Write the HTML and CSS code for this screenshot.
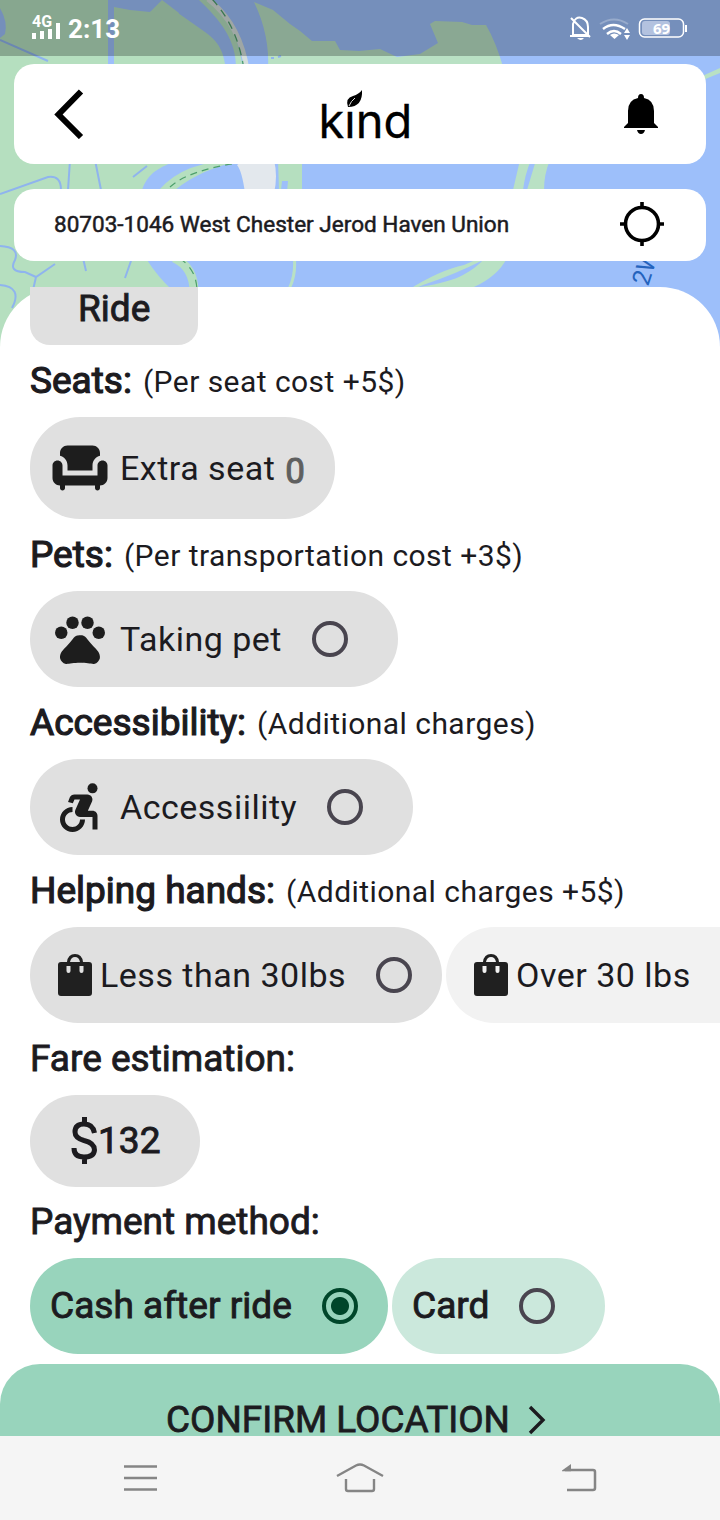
FILE: index.html
```
<!DOCTYPE html>
<html lang="en">
<head>
<meta charset="utf-8">
<title>Kind ride options</title>
<link rel="stylesheet" href="styles.css">
</head>
<body>
<div class="phone">
  <svg class="map" width="720" height="360" viewBox="0 0 720 360" fill="none">
    <rect width="720" height="360" fill="#9dbffa"/>
    <path fill="#b5dfbf" d="M0 0H108V70H114V7L130 10L150 12L163 5L178 13L205 32C222 44 224 56 226 70L180 180L142 190Q148 240 148 260L172 290V360H0Z"/>
    <path fill="#b5dfbf" d="M162 0L179 13Q178 22 170 22L157 15L150 12ZM199 0H212C230 18 240 42 243 70L236 70C237 40 220 20 199 0Z"/>
    <path fill="#9dbffa" d="M108 0H114V70H108V0ZM0 8Q8 22 5 34L0 38Z"/>
    <path fill="#b9e1c4" d="M254 2L273 10L290 24L300 31L312 41L335 41L340 50L359 51L380 49L397 57L420 54L438 43L430 24L435 21L462 22L472 25L486 25Q496 42 504 70H268Q270 35 254 2Z"/>
    <path stroke="#d5dfdc" stroke-width="5" d="M208 -1Q240 24 247 70"/>
    <path stroke="#4da06b" stroke-width="1.3" stroke-dasharray="8 6" d="M212 -1Q238 27 244 70"/>
    <path fill="#9dbffa" d="M142 190C149 169 166 166 177 160H310V190Z"/>
    <path fill="#b5dfbf" d="M159 190Q185 160 240 160H245Q202 168 175 190ZM278 160H302V192H287L288 181L282 181L281 190H279Z"/>
    <path fill="#e3e8ed" d="M237 165L244 160H274Q278 176 274 193H245Q242 171 237 165Z"/>
    <path stroke="#4da06b" stroke-width="1.2" stroke-dasharray="7 5" d="M170 187Q187 171 237 163"/>
    <path fill="#9dbffa" d="M147 260Q158 277 172 290H300V260Z"/>
    <path stroke="#b5dfbf" stroke-width="9" d="M174 258Q194 267 194 292"/>
    <path stroke="#4da06b" stroke-width="1.2" stroke-dasharray="8 6" d="M179 258Q197 269 197 292"/>
    <path fill="#b9e1c4" d="M520 160H531Q525 174 523 190H513ZM536 160H550Q544 174 544 190H527ZM408 290Q440 270 464 265L480 258H507Q498 276 474 287H420Q450 282 463 275Q476 268 483 260Q456 274 423 285L410 291ZM700 77L720 68V73L703 80ZM293 260H296Q297 276 291 288H288Q294 275 293 260Z"/>
    <g stroke="#8fb4ee" stroke-width="2">
      <path d="M0 40L48 61M0 194Q28 184 48 177Q61 175 61 190M70 160L68 190M95 160L101 190M133 177L147 166M0 246Q20 247 15 260Q8 272 25 272L36 277L55 264M83 258L86 271M132 258L125 278M0 285Q23 287 12 308M36 277L33 290"/>
      <path d="M271 58H274M278 57L281 56"/>
    </g>
    <text class="map-label" transform="translate(648 287) rotate(-72)">2W</text>
  </svg>

  <div class="status">
    <svg class="signal" width="32" height="32" viewBox="0 0 32 32" fill="#fff">
      <text class="net" x="0" y="15">4G</text>
      <path d="M0 21h4v6H0zM8 19h4v8H8zM16 17h4v10h-4zM24 11h4v16h-4z"/>
    </svg>
    <span class="time">2:13</span>
    <svg class="status-icons" width="120" height="30" viewBox="0 0 120 30" fill="none" stroke="#fff" stroke-width="2">
      <path d="M5 22V11Q7 3 14 5Q20 7 20 14V22ZM2 23H21M3 5L22 24"/>
      <path fill="#fff" stroke="none" d="M9 25h7q-3 4-7 0z"/>
      <path stroke-width="2.400" d="M35 16Q45 8 57 16M39 21Q46 15 53 21"/>
      <path opacity=".25" d="M32 11Q46 2 60 11"/>
      <path fill="#fff" stroke="none" d="M42 22Q46 19 51 22L46.500 26ZM56 20l3-5 3 5zM56 22h6l-3 5z"/>
      <rect x="71.500" y="6" width="44" height="18" rx="5" stroke-width="1.500"/>
      <rect x="74" y="8" width="28" height="14" rx="3" fill="#b3c2df" stroke="none"/>
      <path d="M118 12v7"/>
      <text class="battery" x="85" y="20.500">69</text>
    </svg>
  </div>

  <header class="topbar">
    <svg width="34" height="50" viewBox="0 0 34 50" fill="none" stroke="#000" stroke-width="6"><path d="M30 2.500L7.500 25.500L30 48"/></svg>
    <div class="logo">
      <span class="word">kınd</span>
      <svg class="leaf" width="18" height="20" viewBox="0 0 18 20"><path d="M17 0Q18 17 3 17Q0 8 8 6Q14 4 17 0Z"/><path d="M4 16Q6 11 10 8" fill="none" stroke="#ddd" stroke-width="1"/></svg>
    </div>
    <svg width="34" height="42" viewBox="0 0 34 42"><path d="M17 1q3 0 3 4q10 2 10 13V30l4 4v1H0v-1l4-4V18Q4 7 14 5q0-4 3-4zM13 37h8q-1 4-4 4t-4-4z"/></svg>
  </header>

  <div class="address">
    <span>80703-1046 West Chester Jerod Haven Union</span>
    <svg width="44" height="44" viewBox="0 0 44 44" fill="none" stroke="#000" stroke-width="3.600"><circle cx="22" cy="22" r="16.500"/><path d="M22 0v6M22 38v6M0 22h6M38 22h6"/></svg>
  </div>

  <main class="sheet">
    <div class="ride">Ride</div>
    <h2 class="heading tight">Seats: <small>(Per seat cost +5$)</small></h2>
    <div class="chip seat">
      <svg class="icon" viewBox="0 0 24 24"><path d="M17 13H7v-2c0-1.860-1.280-3.410-3-3.860V6c0-1.650 1.350-3 3-3h10c1.650 0 3 1.350 3 3v1.140c-1.720.45-3 2-3 3.860z"/><path d="M21 9c-1.100 0-2 .9-2 2v4H5v-4c0-1.100-.9-2-2-2s-2 .9-2 2v5c0 1.650 1.350 3 3 3v1c0 .55.45 1 1 1s1-.45 1-1v-1h12v1c0 .55.45 1 1 1s1-.45 1-1v-1c1.650 0 3-1.350 3-3v-5c0-1.100-.9-2-2-2z"/></svg>
      <span class="label">Extra seat</span><span class="count">0</span>
    </div>
    <h2 class="heading tight">Pets: <small>(Per transportation cost +3$)</small></h2>
    <div class="chip pet">
      <svg class="icon" viewBox="0 0 24 24"><circle cx="4.500" cy="9.500" r="2.500"/><circle cx="9" cy="5.500" r="2.500"/><circle cx="15" cy="5.500" r="2.500"/><circle cx="19.500" cy="9.500" r="2.500"/><path d="M17.340 14.860c-.87-1.020-1.600-1.890-2.480-2.910-.46-.54-1.050-1.080-1.750-1.320-.11-.04-.22-.07-.33-.09-.25-.04-.52-.04-.78-.04s-.53 0-.79.05c-.11.02-.22.05-.33.09-.7.24-1.280.78-1.750 1.320-.87 1.020-1.600 1.890-2.480 2.910-1.310 1.310-2.920 2.760-2.620 4.790.29 1.020 1.020 2.030 2.330 2.320.73.15 3.060-.44 5.540-.44h.18c2.480 0 4.810.58 5.540.44 1.310-.29 2.040-1.310 2.330-2.320.31-2.040-1.300-3.490-2.610-4.800z"/></svg>
      <span class="label">Taking pet</span><i class="radio"></i>
    </div>
    <h2 class="heading tight">Accessibility: <small>(Additional charges)</small></h2>
    <div class="chip access">
      <svg class="icon" viewBox="1 0 24 24"><circle cx="18" cy="4.540" r="2"/><path d="M15 17h-2c0 1.650-1.350 3-3 3s-3-1.350-3-3 1.350-3 3-3v-2c-2.760 0-5 2.240-5 5s2.240 5 5 5 5-2.240 5-5zm3-3.500h-1.860l1.670-3.670C18.420 8.500 17.440 7 15.960 7h-5.200c-.81 0-1.540.47-1.870 1.200L8.220 10l1.920.53.65-1.530H13l-1.830 4.100c-.6 1.330.39 2.900 1.850 2.900H18v5h2v-5.500c0-1.100-.9-2-2-2z"/></svg>
      <span class="label">Accessiility</span><i class="radio"></i>
    </div>
    <h2 class="heading tight">Helping hands: <small>(Additional charges +5$)</small></h2>
    <div class="row">
      <div class="chip less">
        <svg class="bag" width="50" height="44" viewBox="0 0 50 44"><path fill-rule="evenodd" d="M11 9h6q1-8 8-8t8 8h6q3 0 3 3v28q0 3-3 3H11q-3 0-3-3V12q0-3 3-3zM20 9h10q-1-5-5-5t-5 5zM16.500 13v5q0 2 2 2t2-2v-5zM29.500 13v5q0 2 2 2t2-2v-5z"/></svg>
        <span class="label">Less than 30lbs</span><i class="radio"></i>
      </div>
      <div class="chip over">
        <svg class="bag" width="50" height="44" viewBox="0 0 50 44"><path fill-rule="evenodd" d="M11 9h6q1-8 8-8t8 8h6q3 0 3 3v28q0 3-3 3H11q-3 0-3-3V12q0-3 3-3zM20 9h10q-1-5-5-5t-5 5zM16.500 13v5q0 2 2 2t2-2v-5zM29.500 13v5q0 2 2 2t2-2v-5z"/></svg>
        <span class="label">Over 30 lbs</span>
      </div>
    </div>
    <h2 class="heading">Fare estimation:</h2>
    <div class="chip fare">
      <svg class="dollar" width="26" height="50" viewBox="0 0 26 50" fill="none" stroke="#1c1b1f" stroke-width="5"><path d="M23.500 17Q22 8 13 8Q4 8 4 16Q4 22 13 24.500Q23.500 27 23.500 34Q23 41 13 41Q3 41 3 32M13.500 1v8M13.500 40v8"/></svg>
      <span class="strong">132</span>
    </div>
    <h2 class="heading pay">Payment method:</h2>
    <div class="row">
      <div class="chip cash"><span class="strong">Cash after ride</span><i class="radio on"></i></div>
      <div class="chip card"><span class="strong">Card</span><i class="radio"></i></div>
    </div>
  </main>

  <div class="confirm">
    <span>CONFIRM LOCATION</span>
    <svg width="18" height="30" viewBox="0 0 18 30" fill="none" stroke="#1c1b1f" stroke-width="3.400"><path d="M2 2L15 15L2 28"/></svg>
  </div>
  <nav class="nav">
    <svg width="34" height="28" viewBox="0 0 34 28" stroke="#858585" stroke-width="2.600"><path d="M0 2.500h33M0 14h33M0 25.500h33"/></svg>
    <svg width="48" height="32" viewBox="0 0 48 32" fill="none" stroke="#858585" stroke-width="2.400"><path d="M1 14L20 3.500Q24 1.500 28 3.500L47 14M10 17V27Q10 29 12 29H36Q38 29 38 27V17"/></svg>
    <svg width="36" height="30" viewBox="0 0 36 30" fill="none" stroke="#858585" stroke-width="2.500"><path d="M4 7H32Q34 7 34 9V25Q34 27 32 27H6"/><path d="M1 7.500L10 1V8.200H1Z" fill="#858585" stroke="none"/></svg>
  </nav>
</div>
</body>
</html>
```
FILE: styles.css
```
* { box-sizing: border-box; }
body { margin: 0; font-family: Roboto, "Liberation Sans", sans-serif; color: #1c1b1f; }
.phone { position: relative; isolation: isolate; width: 720px; height: 1520px; overflow: hidden; display: flex; flex-direction: column; background: #fff; }
.map { position: absolute; inset: 0 0 auto 0; z-index: -1; }
.map-label { font: 25px Roboto, sans-serif; fill: #2463bd; }

.status { height: 56px; flex: none; display: flex; align-items: center; padding: 0 32px; background: rgba(0, 0, 0, .25); color: #fff; }
.signal { overflow: visible; }
.net { font: 700 16px Roboto, sans-serif; }
.time { margin-left: 4px; font-size: 26px; font-weight: 700; line-height: 56px; padding-top: 2px; }
.status-icons { margin-left: auto; }
.battery { font: 700 15px "Noto Sans", sans-serif; fill: #fff; stroke: none; }

.topbar { flex: none; height: 100px; margin: 8px 14px 0; padding: 0 48px 0 37px; display: flex; align-items: center; justify-content: space-between; background: #fff; border-radius: 20px; }
.logo { position: relative; width: 92px; height: 60px; margin-left: 20px; }
.word { display: block; font: 400 47px/60px Inter, sans-serif; color: #000; margin-top: 7px; white-space: nowrap; -webkit-text-stroke: .3px #000; }
.leaf { position: absolute; left: 26px; top: 6px; }

.address { flex: none; height: 72px; margin: 25px 14px 0; padding: 0 42px 2px 40px; display: flex; align-items: center; justify-content: space-between; background: #fff; border-radius: 20px; font-size: 22.55px; -webkit-text-stroke: .5px #1c1b1f; }

.sheet { flex: none; height: 1077px; margin-top: 26px; padding-left: 30px; background: #fff; border-radius: 60px 60px 0 0; }
.ride { width: 168px; height: 58px; padding-left: 48px; background: #e0e0e0; border-radius: 0 0 20px 20px; font-size: 37px; line-height: 43px; -webkit-text-stroke: .9px #1c1b1f; }
.heading { margin: 0; height: 72px; padding-bottom: 2px; display: flex; align-items: center; gap: 11px; font-size: 37px; font-weight: 400; white-space: nowrap; -webkit-text-stroke: .9px #1c1b1f; }
.tight { -webkit-text-stroke-width: 1.2px; }
.heading small { font-size: 30px; letter-spacing: .45px; padding-top: 2px; -webkit-text-stroke-width: 0; }
.pay { height: 71px; padding-bottom: 3px; }
.row { display: flex; gap: 4px; }
.chip { flex: none; height: 96px; padding: 0 50px 0 20px; display: flex; align-items: center; border-radius: 50px; background: #e0e0e0; white-space: nowrap; }
.strong { font-size: 37.1px; padding-bottom: 2px; -webkit-text-stroke: .9px #1c1b1f; }
.icon { flex: none; width: 60px; height: 60px; margin-right: 10px; fill: #1d1d1d; }
.bag { flex: none; fill: #202020; }
.label { font-size: 34px; letter-spacing: .5px; }
.seat { width: 305px; height: 102px; padding-right: 20px; }
.count { margin: 6px 0 0 10px; font-size: 35px; color: #5f5f5f; -webkit-text-stroke: 1px #5f5f5f; }
.pet { width: 368px; }
.access { width: 383px; }
.less { width: 412px; padding-right: 30px; }
.over { width: 412px; background: #f2f2f2; }
.fare { width: 170px; height: 92px; padding: 0 20px 0 41px; gap: 1px; }
.dollar { flex: none; }
.cash { width: 358px; padding-right: 30px; background: #98d4bc; }
.card { width: 213px; background: #cbe8dc; }
.radio { flex: none; width: 36px; height: 36px; margin-left: auto; border: 4px solid #49454f; border-radius: 50%; }
.on { border-color: #00462a; background: radial-gradient(circle, #00462a 8.5px, transparent 9.5px); }

.confirm { flex: none; height: 72px; display: flex; justify-content: center; align-items: flex-start; gap: 18px; padding: 39px 8px 0 0; background: #98d4bc; border-radius: 40px 40px 0 0; font-size: 36.9px; line-height: 33px; white-space: nowrap; -webkit-text-stroke: .8px #1c1b1f; }
.confirm svg { margin-top: 2px; }
.nav { flex: none; height: 84px; display: flex; align-items: center; justify-content: space-between; padding: 0 123px 0 124px; background: #f5f5f5; }
```
